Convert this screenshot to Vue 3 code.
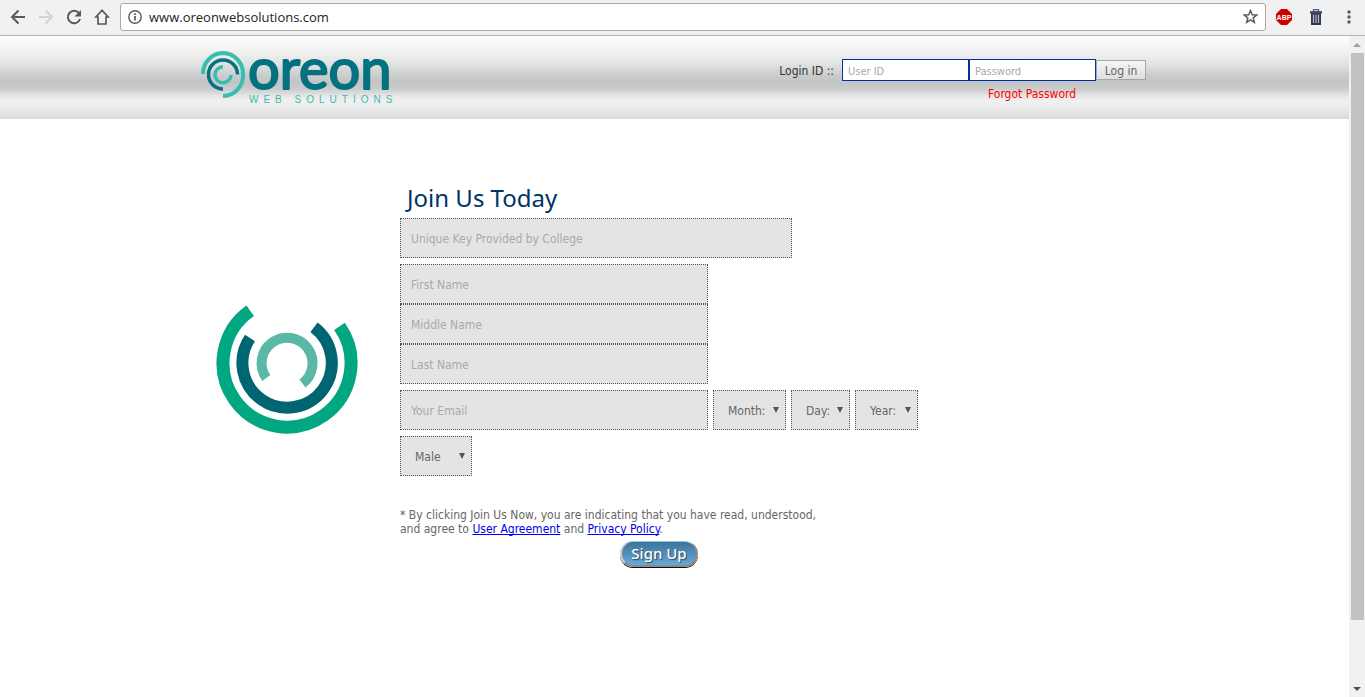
<script setup>
import { ref } from 'vue'

const nameFields = [
  { id: 'first', label: 'First Name' },
  { id: 'middle', label: 'Middle Name' },
  { id: 'last', label: 'Last Name' },
]
const birthFields = [
  { id: 'month', label: 'Month:' },
  { id: 'day', label: 'Day:' },
  { id: 'year', label: 'Year:' },
]
const gender = ref('Male')
</script>

<template>
  <div class="browser">
    <div class="toolbar">
      <nav class="nav">
        <button aria-label="Back">
          <svg width="16" height="16" viewBox="0 0 16 16"><path d="M15 8H2.5M8.5 1.5L2 8l6.500 6.500" fill="none" stroke="#5a5a5a" stroke-width="2" /></svg>
        </button>
        <button aria-label="Forward">
          <svg width="16" height="16" viewBox="0 0 16 16"><path d="M1 8h12.500M7.500 1.500L14 8l-6.500 6.500" fill="none" stroke="#d3d3d3" stroke-width="2" /></svg>
        </button>
        <button aria-label="Reload">
          <svg width="16" height="16" viewBox="0 0 16 16"><path d="M13 4.200A6.200 6.200 0 1 0 14 10" fill="none" stroke="#5a5a5a" stroke-width="2" /><path d="M15 1v6.500H8.500z" fill="#5a5a5a" /></svg>
        </button>
        <button aria-label="Home">
          <svg width="16" height="16" viewBox="0 0 16 16"><path d="M8 1.300L1.800 8H4v7h8V8h2.200z" fill="none" stroke="#5a5a5a" stroke-width="1.700" /></svg>
        </button>
      </nav>
      <div class="address">
        <svg width="14" height="14" viewBox="0 0 14 14"><circle cx="7" cy="7" r="6.200" fill="none" stroke="#5a5a5a" stroke-width="1.400" /><path d="M7 6v4.500M7 3.300v1.600" stroke="#5a5a5a" stroke-width="1.700" /></svg>
        <input aria-label="Address" value="www.oreonwebsolutions.com" />
        <button aria-label="Bookmark">
          <svg width="15" height="15" viewBox="0 0 15 15"><path d="M7.500 1.500l1.700 4.200 4.500.3-3.500 2.900 1.100 4.400-3.800-2.400-3.800 2.400 1.100-4.400L1.300 6l4.500-.3z" fill="none" stroke="#5a5a5a" stroke-width="1.500" /></svg>
        </button>
      </div>
      <div class="extensions">
        <button aria-label="Ad blocker">
          <svg width="16" height="16" viewBox="0 0 16 16"><path d="M5 0h6l5 5v6l-5 5H5l-5-5V5z" fill="#cb0000" /><text x="8" y="11" text-anchor="middle" class="abp">ABP</text></svg>
        </button>
        <button aria-label="Clear data">
          <svg width="12" height="16" viewBox="0 0 12 16"><path d="M3.500 2V.7h5V2" fill="none" stroke="#59607f" stroke-width="1.300" /><path d="M0 2h12v2.500H0z" fill="#4a5170" /><path d="M1 4h10v12H1z" fill="#323653" /><path d="M3.500 5.500V14M6 5.500V14M8.500 5.500V14" stroke="#b4b8c6" stroke-width="1.200" /></svg>
        </button>
        <button aria-label="Menu">
          <svg width="4" height="14" viewBox="0 0 4 14"><g fill="#5a5a5a"><circle cx="2" cy="2" r="1.700" /><circle cx="2" cy="7" r="1.700" /><circle cx="2" cy="12" r="1.700" /></g></svg>
        </button>
      </div>
    </div>

    <div class="viewport">
      <div class="page">
        <header class="banner">
          <div class="container banner-row">
            <svg class="logo" width="200" height="58" viewBox="0 0 200 58" role="img" aria-label="Oreon Web Solutions">
              <g fill="none">
                <path d="M3 25A20.500 20.500 0 0 1 23 4A20.500 20.500 0 0 1 43 25A20.500 20.500 0 0 1 23 47" stroke="#36bfae" stroke-width="4" />
                <path d="M37.500 25.500A14.500 14.500 0 1 0 23 40" stroke="#04717f" stroke-width="3.500" />
                <path d="M23 17.800A8 8 0 1 0 31 26" stroke="#36bfae" stroke-width="3.500" />
              </g>
              <text x="48" y="40" class="word">oreon</text>
              <text x="49" y="54" class="sub">WEB SOLUTIONS</text>
            </svg>
            <form class="login" @submit.prevent>
              <label for="login-id">Login ID ::</label>
              <div class="credentials">
                <input id="login-id" placeholder="User ID" />
                <input type="password" aria-label="Password" placeholder="Password" />
                <a href="#forgot">Forgot Password</a>
              </div>
              <button class="login-button">Log in</button>
            </form>
          </div>
        </header>

        <main class="container join">
          <svg class="mark" width="142" height="142" viewBox="0 0 142 142" aria-hidden="true">
            <g fill="none">
              <path d="M34.200 18.700A64 64 0 1 0 123.500 34.400" stroke="#00a781" stroke-width="13" />
              <path d="M34 46A44.700 44.700 0 1 0 98 35.200" stroke="#006573" stroke-width="12" />
              <path d="M50.300 86A25.500 25.500 0 1 1 86.500 91.500" stroke="#5cb8a6" stroke-width="10" />
            </g>
          </svg>
          <form class="signup" @submit.prevent>
            <h1>Join Us Today</h1>
            <input class="field key" aria-label="Unique Key Provided by College" placeholder="Unique Key Provided by College" />
            <div class="names">
              <input v-for="f in nameFields" :key="f.id" class="field" :aria-label="f.label" :placeholder="f.label" />
            </div>
            <div class="row">
              <input class="field" type="email" aria-label="Your Email" placeholder="Your Email" />
              <span v-for="f in birthFields" :key="f.id" class="pick" :class="f.id">
                <select :aria-label="f.label"><option>{{ f.label }}</option></select>
              </span>
            </div>
            <span class="pick gender">
              <select v-model="gender" aria-label="Gender"><option>Male</option><option>Female</option></select>
            </span>
            <p>* By clicking Join Us Now, you are indicating that you have read, understood,<br />and agree to <a href="#agreement">User Agreement</a> and <a href="#privacy">Privacy Policy</a>.</p>
            <button class="submit">Sign Up</button>
          </form>
        </main>
      </div>

      <div class="scrollbar" aria-hidden="true">
        <svg width="16" height="17" viewBox="0 0 16 17"><path d="M4 11l4-4 4 4z" fill="#a3a3a3" /></svg>
        <div class="track"><div class="thumb"></div></div>
        <svg width="16" height="17" viewBox="0 0 16 17"><path d="M4 7l4 4 4-4z" fill="#505050" /></svg>
      </div>
    </div>
  </div>
</template>

<style>
body { margin: 0; }
</style>

<style scoped>
* { box-sizing: border-box; }
.browser {
  display: flex;
  flex-direction: column;
  min-height: 100vh;
  background: #fff;
  color: #666;
  font-family: "DejaVu Sans Condensed", "Noto Sans", sans-serif;
  font-size: 12px;
}
button, input, select { font: inherit; color: inherit; margin: 0; }
svg { display: block; flex: none; }

.toolbar {
  display: flex;
  align-items: center;
  height: 36px;
  padding: 0 14px 2px 10px;
  background: #f1f1f1;
  border-bottom: 1px solid #b2b2b2;
}
.toolbar button { padding: 0; border: 0; background: none; }
.nav { display: flex; gap: 12px; width: 110px; }
.address {
  display: flex;
  align-items: center;
  flex: 1;
  height: 28px;
  padding: 0 7px;
  background: #fff;
  border: 1px solid #a9a9a9;
  border-radius: 3px;
}
.address input {
  flex: 1;
  height: 24px;
  padding: 0 7px;
  border: 0;
  outline: 0;
  color: #222;
  font-family: "Open Sans", sans-serif;
  font-size: 13px;
}
.extensions { display: flex; align-items: center; gap: 18px; padding-left: 10px; }
.extensions button:last-child { margin-left: 7px; }
.abp { fill: #fff; font: bold 7px "Liberation Sans", sans-serif; }

.viewport { display: flex; flex: 1; }
.page { flex: 1; min-width: 0; }
.container { max-width: 949px; margin: 0 auto; }
.banner {
  height: 83px;
  background: linear-gradient(#fff 0%, #eee 22%, #e0e3e1 34%, #cacbcd 48%, #c3c4c7 56%, #cbcccd 64%, #e8e8e8 73%, #f0f0f0 78%, #ececec 86%, #d8dad9 100%);
}
.banner-row { display: flex; justify-content: space-between; padding: 13px 3px 0 0; }
.logo { overflow: visible; }
.word {
  fill: #04717f;
  stroke: #04717f;
  stroke-width: 2px;
  stroke-linejoin: round;
  font: 400 56px Lato, sans-serif;
}
.sub { fill: #36bfae; font: 10px "Liberation Sans", sans-serif; letter-spacing: 5px; }
.login { display: flex; align-items: flex-start; padding-top: 10px; }
.login label { padding-right: 8px; color: #333; line-height: 24px; }
.credentials { display: grid; grid-template-columns: 127px 127px; row-gap: 6px; }
.credentials input {
  width: 100%;
  height: 22px;
  padding: 2px 5px 0;
  border: 1px solid #039;
  background: #fff;
  font-size: 11px;
}
.credentials a { grid-column: 2; padding-left: 19px; color: #f00; line-height: 14px; text-decoration: none; }
.login-button {
  width: 50px;
  height: 20px;
  margin-top: 1px;
  padding: 1px 0 0;
  border: 1px solid #a6a6a6;
  background: linear-gradient(#f6f6f6, #dedede);
}
input::placeholder { color: #a9a9a9; opacity: 1; }

.join { display: flex; padding-top: 61px; }
.mark { margin: 112px 42px 0 16px; }
.signup { flex: 1; min-width: 0; display: flex; flex-direction: column; align-items: flex-start; }
h1 {
  margin: 0;
  padding: 0 0 2px 7px;
  color: #036;
  font: 24px/36px "Noto Sans", sans-serif;
}
.field {
  width: 308px;
  height: 40px;
  padding: 2px 10px 0;
  border: 1px dotted #555;
  background: #e4e4e4;
}
.key { width: 392px; }
.names { display: flex; flex-direction: column; margin: 6px 0; }
.row { display: flex; flex-wrap: wrap; gap: 5px; }
.pick { position: relative; height: 40px; }
.pick::after {
  content: "";
  position: absolute;
  top: 17px;
  right: 7px;
  border: 3px solid transparent;
  border-top: 6px solid #555;
  border-bottom: 0;
  pointer-events: none;
}
.pick select {
  width: 100%;
  height: 100%;
  padding: 2px 14px 0;
  border: 1px dotted #555;
  border-radius: 0;
  background: #e4e4e4;
  appearance: none;
}
.month { width: 73px; }
.day { width: 59px; }
.year { width: 63px; }
.gender { width: 72px; margin-top: 6px; }
p { margin: 32px 0 5px; line-height: 14px; }
p a { color: #00e; text-decoration-skip-ink: none; }
.submit {
  width: 78px;
  height: 26px;
  margin-left: 220px;
  padding: 0 0 2px;
  border: 2px solid;
  border-width: 1px 2px 2px;
  border-color: #8cc8ea #8a8a8a #8a8a8a #ccc;
  border-radius: 14px;
  background: linear-gradient(#3d7399, #65aadb);
  box-shadow: 0 1px 0 #111;
  color: #fff;
  font: 500 15px/20px "Noto Sans", sans-serif;
  text-shadow: 1px 1px 1px #345;
}

.scrollbar { display: flex; flex-direction: column; width: 16px; background: #f1f1f1; }
.track { flex: 1; padding: 0 1px 60px 2px; display: flex; }
.thumb { flex: 1; background: #c1c1c1; }
</style>
